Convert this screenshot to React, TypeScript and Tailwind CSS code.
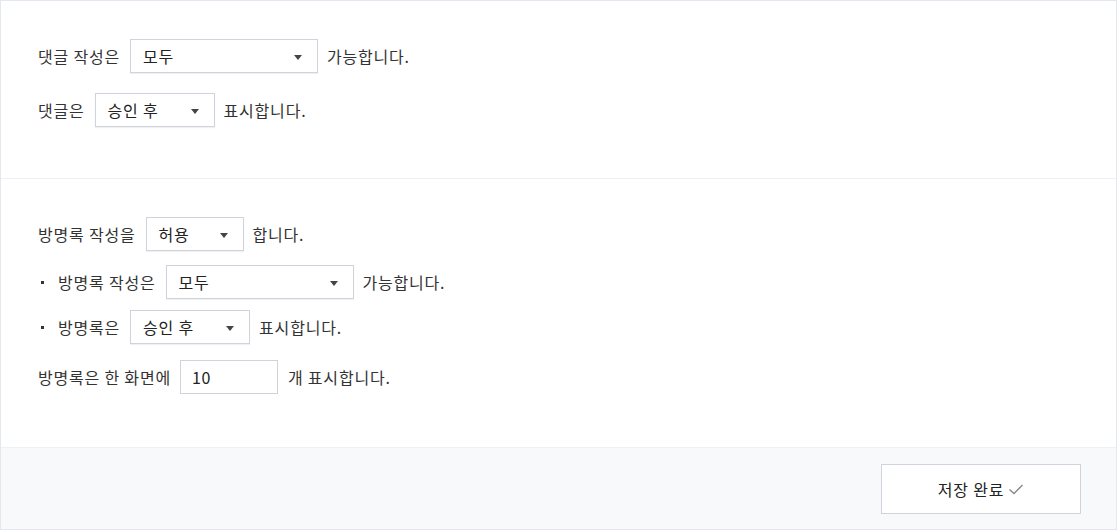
import React from "react";

const font = { fontFamily: '"Noto Sans CJK KR", "Noto Sans", sans-serif' };

function Select({ value, w }: { value: string; w: string }) {
  return (
    <div
      className={`relative flex h-[34px] items-center border border-[#cfd4dc] bg-white pl-[12px] shadow-[0_1px_1px_rgba(0,0,0,0.06)] ${w}`}
    >
      <span className="text-[16px] tracking-[0.8px] text-[#222]">{value}</span>
      <span className="absolute right-[15px] top-[15px] h-0 w-0 border-x-[4px] border-t-[5px] border-x-transparent border-t-[#444]" />
    </div>
  );
}

export default function App() {
  return (
    <div className="h-[530px] w-[1117px] bg-white text-[16px] tracking-[0.8px] text-[#333]" style={font}>
      <div className="flex h-full flex-col border border-[#e3e7ef]">
        <div className="flex flex-col gap-[20px] border-b border-[#eef0f3] px-[37px] pt-[38px] pb-[51px]">
          <div className="flex items-center">
            <span>댓글 작성은</span>
            <div className="ml-[10px] mr-[9px]">
              <Select value="모두" w="w-[188px]" />
            </div>
            <span>가능합니다.</span>
          </div>
          <div className="flex items-center">
            <span>댓글은</span>
            <div className="ml-[10px] mr-[9px]">
              <Select value="승인 후" w="w-[120px]" />
            </div>
            <span>표시합니다.</span>
          </div>
        </div>
        <div className="flex flex-col px-[37px] pt-[38px] pb-[53px]">
          <div className="flex items-center">
            <span>방명록 작성을</span>
            <div className="ml-[10px] mr-[9px]">
              <Select value="허용" w="w-[98px]" />
            </div>
            <span>합니다.</span>
          </div>
          <div className="mt-[14px] flex items-center">
            <span className="ml-[3px] mr-[11px] h-[3px] w-[3px] bg-[#333]" />
            <span className="ml-[3px]">방명록 작성은</span>
            <div className="ml-[10px] mr-[9px]">
              <Select value="모두" w="w-[188px]" />
            </div>
            <span>가능합니다.</span>
          </div>
          <div className="mt-[11px] flex items-center">
            <span className="ml-[3px] mr-[11px] h-[3px] w-[3px] bg-[#333]" />
            <span className="ml-[3px]">방명록은</span>
            <div className="ml-[10px] mr-[9px]">
              <Select value="승인 후" w="w-[120px]" />
            </div>
            <span>표시합니다.</span>
          </div>
          <div className="mt-[16px] flex items-center">
            <span>방명록은 한 화면에</span>
            <div className="ml-[9px] mr-[10px] flex h-[34px] w-[98px] items-center border border-[#cfd4dc] bg-white pl-[11px] text-[16px] text-[#222]">
              10
            </div>
            <span>개 표시합니다.</span>
          </div>
        </div>
        <div className="flex flex-1 justify-end border-t border-[#edf0f4] bg-[#f8f9fb] pt-[16px] pr-[35px]">
          <button className="flex h-[50px] w-[200px] items-center justify-center gap-[4px] border border-[#cfd4dc] bg-white text-[16px] tracking-[0.8px] text-[#222]">
            <span>저장 완료</span>
            <svg width="16" height="12" viewBox="0 0 16 12" fill="none">
              <path d="M1.5 6.5 L6 10.5 L14.5 2" stroke="#888" strokeWidth="1.4" />
            </svg>
          </button>
        </div>
      </div>
    </div>
  );
}
